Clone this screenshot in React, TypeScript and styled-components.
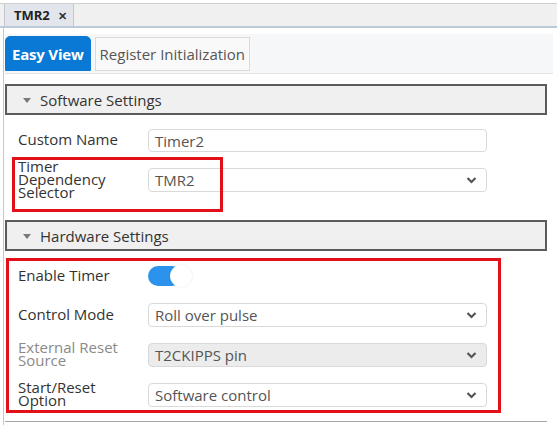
import React from "react"
import styled, { createGlobalStyle } from "styled-components"

const Global = createGlobalStyle`
  html, body {
    margin: 0;
    padding: 0;
    background: #ffffff;
    font-family: "Open Sans", "Noto Sans", sans-serif;
  }
`

const Page = styled.div`
  width: 557px;
  height: 425px;
  overflow: hidden;
  box-sizing: border-box;
  padding-top: 3px;
`

const DocTabs = styled.div`
  display: flex;
  height: 22px;
  background: #f0f0f0;
  border-top: 1px solid #cfcfcf;
  border-bottom: 2px solid #bccad8;
  padding-left: 4px;
`

const DocTab = styled.div`
  display: flex;
  align-items: center;
  gap: 8px;
  width: 70px;
  box-sizing: border-box;
  padding-left: 9px;
  background: #e2e6ec;
  border-left: 1px solid #c4c8ce;
  border-right: 1px solid #c4c8ce;
  font-size: 13px;
  font-weight: 700;
  color: #222;
`

const Close = styled.span`
  font-size: 11px;
  font-weight: 700;
  color: #333;
`

const Panel = styled.div`
  border-left: 1px solid #c8c8c8;
  margin-left: 3px;
  padding-left: 1px;
  height: 399px;
  box-sizing: border-box;
  padding-top: 6px;
`

const ViewTabs = styled.div`
  display: flex;
  align-items: flex-end;
  gap: 4px;
  width: 548px;
  height: 40px;
  box-sizing: border-box;
  padding-bottom: 2px;
  background: #f6f7f9;
  border-bottom: 1px solid #e2e4e6;
`

const ViewTab = styled.div<{ $active?: boolean }>`
  display: flex;
  align-items: center;
  box-sizing: border-box;
  height: ${({ $active }) => ($active ? "35px" : "34px")};
  padding: 0 ${({ $active }) => ($active ? "6px" : "4px")};
  font-size: 15px;
  font-weight: ${({ $active }) => ($active ? 700 : 400)};
  color: ${({ $active }) => ($active ? "#ffffff" : "#555555")};
  background: ${({ $active }) => ($active ? "#0a79d6" : "#f9f9f9")};
  border: 1px solid ${({ $active }) => ($active ? "#0a79d6" : "#dadada")};
  border-radius: ${({ $active }) => ($active ? "5px 5px 0 0" : "0")};
  letter-spacing: ${({ $active }) => ($active ? "-0.2px" : "0")};
`

const Section = styled.div<{ $top: number }>`
  position: relative;
  width: 542px;
  margin-top: ${({ $top }) => $top}px;
`

const SectionHead = styled.div`
  display: flex;
  align-items: center;
  gap: 9px;
  height: 31px;
  box-sizing: border-box;
  padding-left: 16px;
  background: #f0f0f0;
  border: 2px solid #5b5b5b;
  font-size: 15px;
  color: #333;
`

const Caret = styled.span`
  width: 0;
  height: 0;
  border-left: 4px solid transparent;
  border-right: 4px solid transparent;
  border-top: 5px solid #7a7a7a;
  margin-top: 1px;
`

const Rows = styled.div<{ $top: number; $gap: number }>`
  display: flex;
  flex-direction: column;
  gap: ${({ $gap }) => $gap}px;
  padding: ${({ $top }) => $top}px 0 0 13px;
`

const Row = styled.div<{ $h?: number }>`
  display: grid;
  grid-template-columns: 130px 339px;
  grid-template-rows: ${({ $h }) => $h ?? 24}px;
  align-items: center;
`

const Label = styled.div<{ $muted?: boolean }>`
  font-size: 15px;
  line-height: 13px;
  color: ${({ $muted }) => ($muted ? "#8a8a8a" : "#333333")};
  margin-top: -2px;
`

const Field = styled.div<{ $disabled?: boolean; $h?: number }>`
  display: flex;
  align-items: center;
  justify-content: space-between;
  height: ${({ $h }) => $h ?? 24}px;
  box-sizing: border-box;
  padding: 0 9px 0 6px;
  border: 1px solid #d9d9d9;
  border-radius: 4px;
  background: ${({ $disabled }) => ($disabled ? "#ececec" : "#ffffff")};
  font-size: 15px;
  color: #555;
`

const Switch = styled.div`
  position: relative;
  width: 44px;
  height: 22px;
`

const Track = styled.div`
  width: 34px;
  height: 20px;
  margin-top: 1px;
  border-radius: 10px;
  background: #2b93ec;
`

const Knob = styled.div`
  position: absolute;
  top: 0;
  left: 22px;
  width: 22px;
  height: 22px;
  border-radius: 50%;
  background: #ffffff;
  box-shadow: 0 0 2px rgba(0, 0, 0, 0.12);
`

const Mark = styled.div<{ $x: number; $y: number; $w: number; $h: number }>`
  position: absolute;
  left: ${({ $x }) => $x}px;
  top: ${({ $y }) => $y}px;
  width: ${({ $w }) => $w}px;
  height: ${({ $h }) => $h}px;
  border: 3px solid #e3101a;
  box-sizing: border-box;
  pointer-events: none;
`

const Rule = styled.div`
  width: 542px;
  height: 1px;
  margin-top: 14px;
  background: #a8a8a8;
`

const Chevron = () => (
  <svg width="11" height="8" viewBox="0 0 11 8">
    <polyline points="1.5,2 5.5,6 9.5,2" fill="none" stroke="#555" strokeWidth="2.2" />
  </svg>
)

const Select = ({ value, disabled }: { value: string; disabled?: boolean }) => (
  <Field $disabled={disabled}>
    <span>{value}</span>
    <Chevron />
  </Field>
)

export default function App() {
  return (
    <Page>
      <Global />
      <DocTabs>
        <DocTab>
          TMR2 <Close>✕</Close>
        </DocTab>
      </DocTabs>
      <Panel>
        <ViewTabs>
          <ViewTab $active>Easy View</ViewTab>
          <ViewTab>Register Initialization</ViewTab>
        </ViewTabs>

        <Section $top={10}>
          <SectionHead>
            <Caret />
            Software Settings
          </SectionHead>
          <Rows $top={14} $gap={16}>
            <Row $h={23}>
              <Label>Custom Name</Label>
              <Field $h={23}>Timer2</Field>
            </Row>
            <Row>
              <Label>
                Timer
                <br />
                Dependency
                <br />
                Selector
              </Label>
              <Select value="TMR2" />
            </Row>
          </Rows>
          <Mark $x={7} $y={73} $w={211} $h={55} />
        </Section>

        <Section $top={28}>
          <SectionHead>
            <Caret />
            Hardware Settings
          </SectionHead>
          <Rows $top={14} $gap={16}>
            <Row $h={22}>
              <Label>Enable Timer</Label>
              <Switch>
                <Track />
                <Knob />
              </Switch>
            </Row>
            <Row>
              <Label>Control Mode</Label>
              <Select value="Roll over pulse" />
            </Row>
            <Row>
              <Label $muted>
                External Reset
                <br />
                Source
              </Label>
              <Select value="T2CKIPPS pin" disabled />
            </Row>
            <Row>
              <Label>
                Start/Reset
                <br />
                Option
              </Label>
              <Select value="Software control" />
            </Row>
          </Rows>
          <Mark $x={1} $y={38} $w={495} $h={155} />
        </Section>
        <Rule />
      </Panel>
    </Page>
  )
}
